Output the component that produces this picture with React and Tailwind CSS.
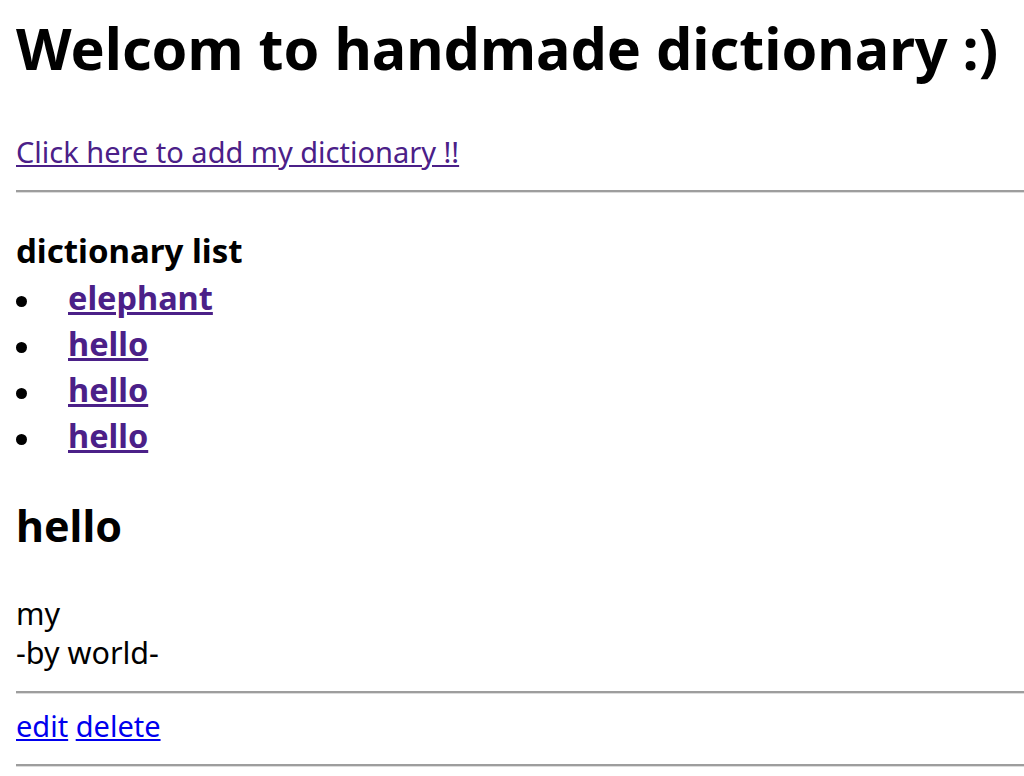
const Rule = ({className}) => (
    <div className={"h-[3px] border-t-2 border-t-[#9d9d9d] border-b border-b-[#dcdcdc] " + className}/>
);

const words = ["elephant", "hello", "hello", "hello"];

export default function App() {
    return (
        <div className="min-h-screen bg-white pl-4 text-black font-['Noto_Sans',sans-serif]">
            <h1 className="h-[96px] text-[57.5px] leading-[96px] font-bold whitespace-nowrap">
                Welcom to handmade dictionary :)
            </h1>

            <div className="mt-[36px] h-[40px] text-[29px] leading-[40px]">
                <a href="#" className="text-[#4b2088] underline">Click here to add my dictionary !!</a>
            </div>

            <Rule className="mt-[18px]"/>

            <h3 className="mt-[38px] h-[40px] text-[33px] leading-[40px] font-bold">dictionary list</h3>

            <ul className="mt-[4px] flex flex-col">
                {words.map((w, i) => (
                    <li key={i} className="flex h-[46px] items-start">
                        <span className="flex h-[46px] w-[52px] items-center">
                            <span className="mt-[6px] block h-[11px] w-[11px] rounded-full bg-black"/>
                        </span>
                        <a href="#"
                           className="text-[32.5px] leading-[46px] font-bold text-[#4b2088] underline">{w}</a>
                    </li>
                ))}
            </ul>

            <h2 className="mt-[39px] h-[56px] text-[43px] leading-[56px] font-bold">hello</h2>

            <div className="mt-[40px] text-[30.5px] leading-[39px]">
                <div>my</div>
                <div>-by world-</div>
            </div>

            <Rule className="mt-[19px]"/>

            <div className="mt-[12px] h-[40px] text-[29px] leading-[40px]">
                <a href="#" className="text-[#0000ee] underline">edit</a>{" "}
                <a href="#" className="text-[#0000ee] underline">delete</a>
            </div>

            <Rule className="mt-[18px]"/>
        </div>
    );
}
